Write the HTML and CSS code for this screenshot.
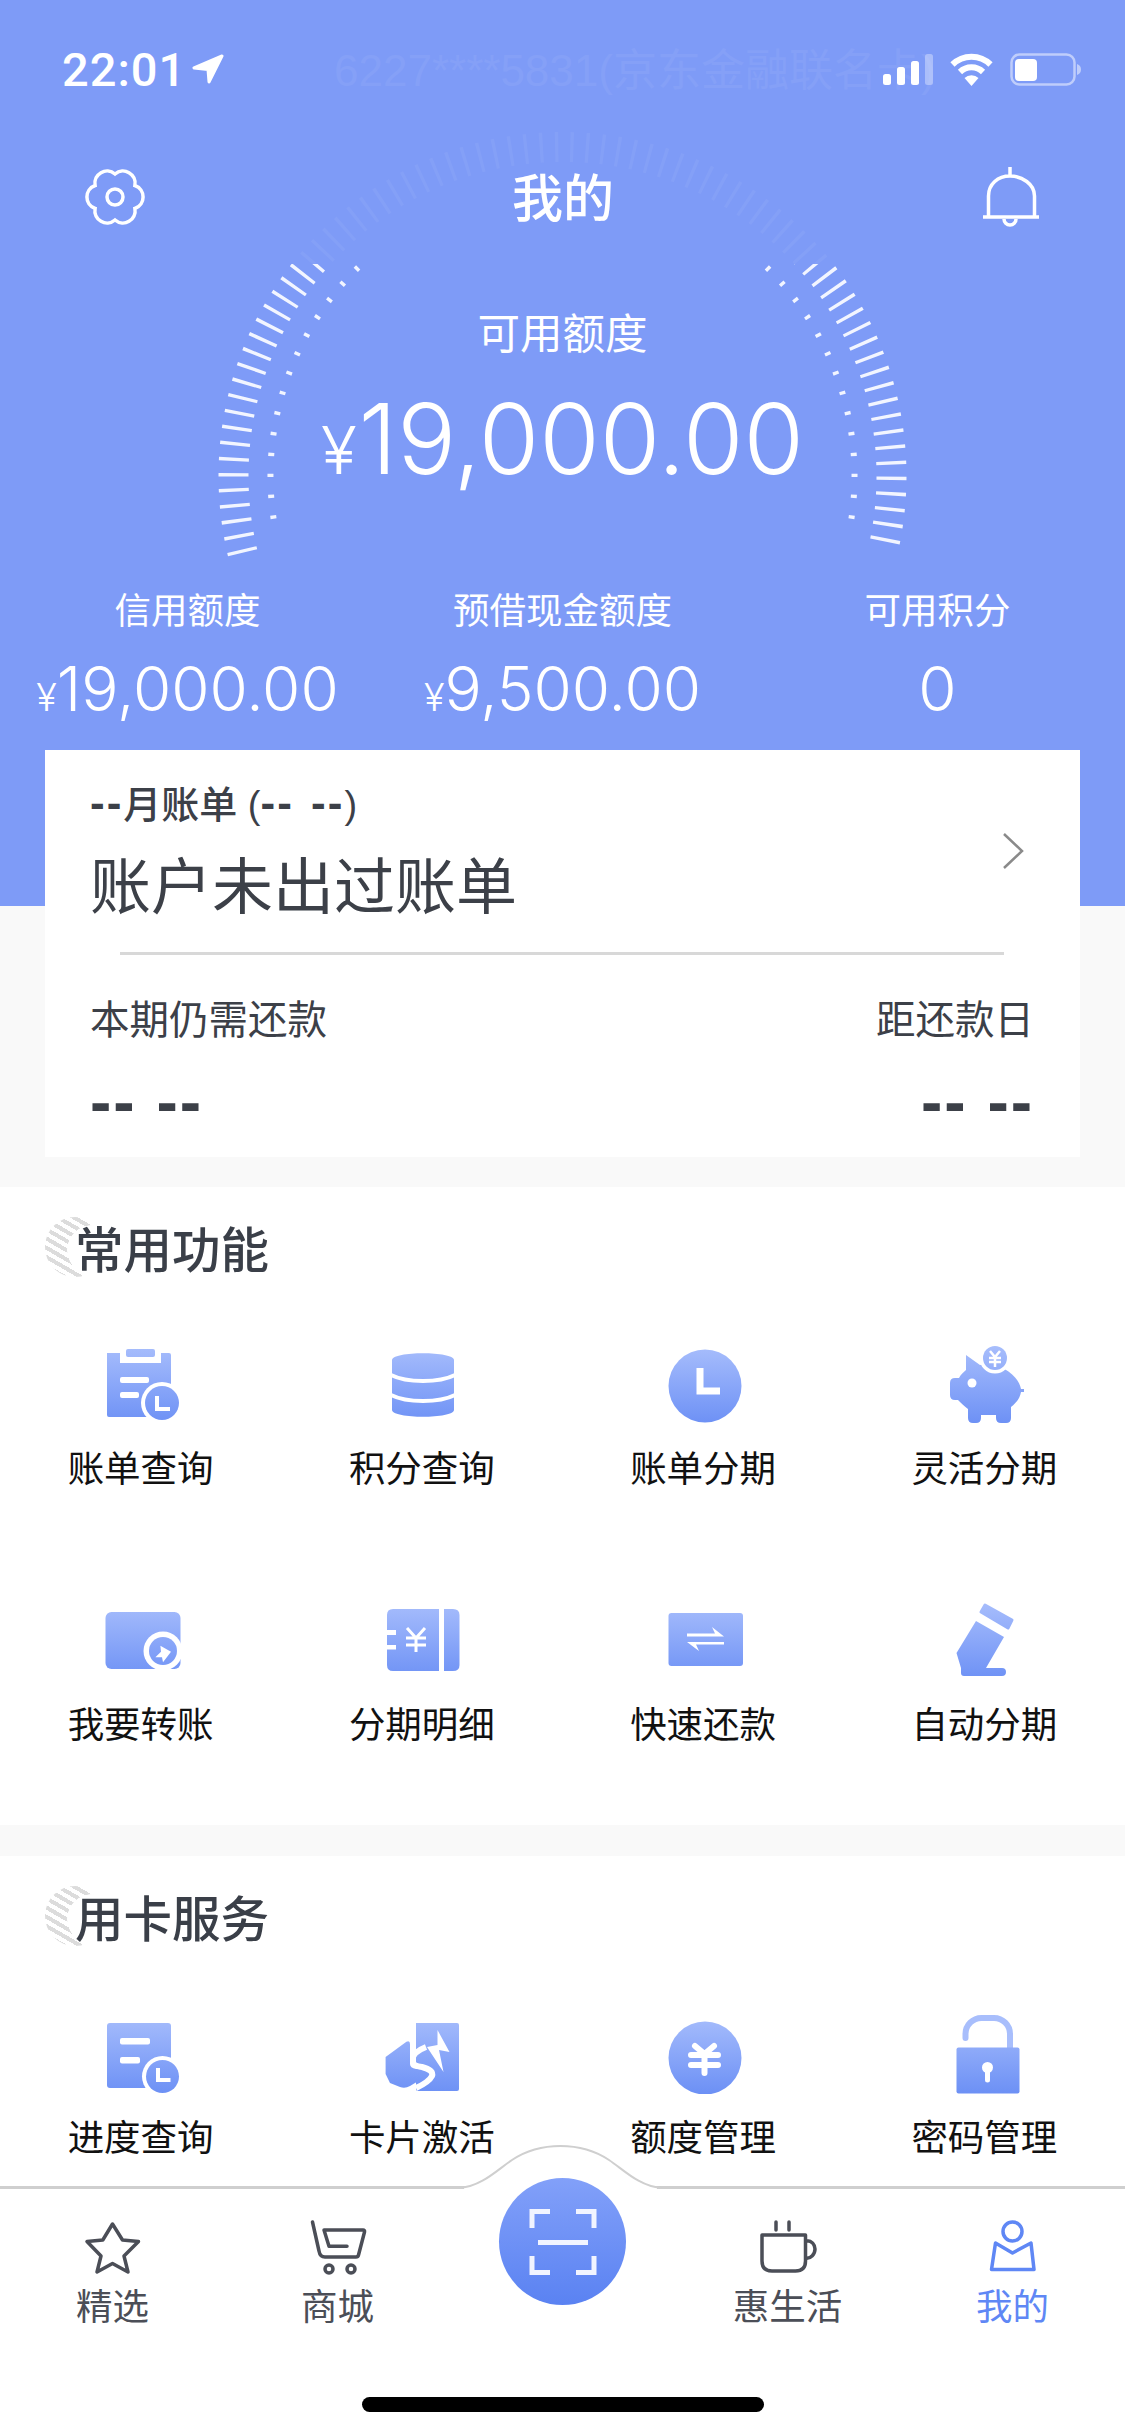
FILE: index.html
```html
<!DOCTYPE html>
<html lang="zh-CN">
<head>
    <meta charset="UTF-8">
    <meta name="viewport" content="width=device-width, initial-scale=1.0">
    <title>我的</title>
    <link rel="stylesheet" href="styles.css">
</head>
<body>
    <!-- shared icon gradient -->
    <svg class="defs" width="0" height="0">
        <defs>
            <linearGradient id="ig" gradientUnits="userSpaceOnUse" x1="0" y1="0" x2="0" y2="80">
                <stop offset="0" stop-color="#a8befc"/>
                <stop offset="1" stop-color="#6c90f5"/>
            </linearGradient>
        </defs>
    </svg>

    <header class="hero">
        <!-- gauge ticks -->
        <svg class="gauge" width="1125" height="600" viewBox="0 0 1125 600">
            <defs>
                <clipPath id="gauge-low"><rect x="0" y="264" width="1125" height="336"/></clipPath>
                <clipPath id="gauge-high"><rect x="0" y="0" width="1125" height="264"/></clipPath>
            </defs>
            <path class="tick tick-faint" clip-path="url(#gauge-high)" d="M242.6 552.8A329 329 0 1 1 882.4 552.8"/>
            <path class="tick" clip-path="url(#gauge-low)" d="M242.6 552.8A329 329 0 1 1 882.4 552.8"/>
            <path class="dot" d="M273.6 518.7A292 292 0 0 1 359.6 266"/>
            <path class="dot" d="M851.4 518.7A292 292 0 0 0 765.4 266"/>
        </svg>

        <div class="status">
            <span class="ghost">6227****5831(京东金融联名卡)</span>
            <span class="time">22:01</span>
            <svg class="loc" width="32" height="30" viewBox="0 0 32 30"><path d="M30 2L2 14L16 15.500L17 28Z"/></svg>
            <div class="status-right">
                <svg width="50" height="32" viewBox="0 0 50 32">
                    <rect x="0" y="21" width="8" height="11" rx="2.500" fill="#fff"/>
                    <rect x="14" y="14" width="8" height="18" rx="2.500" fill="#fff"/>
                    <rect x="28" y="8" width="8" height="24" rx="2.500" fill="#fff"/>
                    <rect x="42" y="1" width="8" height="31" rx="2.500" fill="#fff" opacity=".35"/>
                </svg>
                <svg width="47" height="33" viewBox="0 0 47 33">
                    <path d="M4.500 11.500A27 27 0 0 1 42.500 11.500M12 19A16.500 16.500 0 0 1 35 19" fill="none" stroke="#fff" stroke-width="6"/>
                    <path d="M16.500 25A10 10 0 0 1 30.500 25L23.500 33Z" fill="#fff"/>
                </svg>
                <svg width="71" height="33" viewBox="0 0 71 33">
                    <rect x="1.500" y="1.500" width="63" height="30" rx="8" fill="none" stroke="#fff" stroke-width="2.500" opacity=".5"/>
                    <rect x="5" y="6" width="22" height="22" rx="4" fill="#fff"/>
                    <path d="M67 11C70 12 71 14 71 16.500C71 19 70 21 67 22Z" fill="#fff" opacity=".5"/>
                </svg>
            </div>
        </div>

        <nav class="topnav">
            <svg width="60" height="60" viewBox="0 0 60 60" class="line-white">
                <path d="M30 7C38.700 -.5 52 7.200 49.900 18.500C60.800 22.300 60.800 37.700 49.900 41.500C52 52.800 38.700 60.500 30 53C21.300 60.500 8 52.800 10.100 41.500C-.8 37.700 -.8 22.300 10.100 18.500C8 7.200 21.300 -.5 30 7Z"/>
                <circle cx="30" cy="30" r="8"/>
            </svg>
            <h1 class="title">我的</h1>
            <svg width="60" height="60" viewBox="0 0 60 60" class="line-white">
                <path d="M29 0V9M7.500 49V29C7.500 17 17 9 29 9C41 9 53.500 17 53.500 29V49M2 50H58M23 52A6 6 0 0 0 35 52"/>
            </svg>
        </nav>

        <p class="avail-label">可用额度</p>
        <p class="avail-amount"><span class="yen">¥</span>19,000.00</p>

        <div class="stats">
            <div class="stat">
                <p class="stat-label">信用额度</p>
                <p class="stat-value"><span class="yen-s">¥</span>19,000.00</p>
            </div>
            <div class="stat">
                <p class="stat-label">预借现金额度</p>
                <p class="stat-value"><span class="yen-s">¥</span>9,500.00</p>
            </div>
            <div class="stat">
                <p class="stat-label">可用积分</p>
                <p class="stat-value">0</p>
            </div>
        </div>
    </header>

    <section class="card">
        <div class="card-top">
            <div>
                <p class="card-month"><span class="dd">--</span>月账单 (<span class="dd">-- --</span>)</p>
                <p class="card-title">账户未出过账单</p>
            </div>
            <svg class="chevron" width="22" height="38" viewBox="0 0 22 38"><path d="M2 2L20 19L2 36"/></svg>
        </div>
        <div class="card-line"></div>
        <div class="card-bottom">
            <div>
                <p class="card-sub">本期仍需还款</p>
                <p class="card-dash">-- --</p>
            </div>
            <div class="right">
                <p class="card-sub">距还款日</p>
                <p class="card-dash">-- --</p>
            </div>
        </div>
    </section>

    <section class="block">
        <h2 class="block-head"><i class="deco"></i><span>常用功能</span></h2>
        <div class="grid">
            <div class="item">
                <svg class="ico" viewBox="0 0 80 80">
                    <path d="M6 8H19V18H60V8H68Q70 8 70 10V70Q70 72 68 72H8Q6 72 6 70Z" fill="url(#ig)"/>
                    <rect x="25" y="4" width="29" height="8" rx="2" fill="url(#ig)"/>
                    <rect x="19" y="32" width="29" height="6" rx="2" fill="#fff"/>
                    <rect x="19" y="47" width="19" height="6" rx="2" fill="#fff"/>
                    <circle cx="61" cy="58" r="21" fill="#fff"/>
                    <circle cx="61" cy="58" r="17" fill="url(#ig)"/>
                    <path d="M56 51V64H69" fill="none" stroke="#fff" stroke-width="4"/>
                </svg>
                <p>账单查询</p>
            </div>
            <div class="item">
                <svg class="ico" viewBox="0 0 80 80">
                    <path d="M10 15C10 6 72 6 72 15V65C72 74 10 74 10 65Z" fill="url(#ig)"/>
                    <path d="M9 30C25 38 57 38 73 30M9 50C25 58 57 58 73 50" fill="none" stroke="#fff" stroke-width="4"/>
                </svg>
                <p>积分查询</p>
            </div>
            <div class="item">
                <svg class="ico" viewBox="0 0 80 80">
                    <circle cx="42" cy="41" r="36.500" fill="url(#ig)"/>
                    <path d="M37 23V46H57" fill="none" stroke="#fff" stroke-width="7"/>
                </svg>
                <p>账单分期</p>
            </div>
            <div class="item">
                <svg class="ico" viewBox="0 0 80 80">
                    <path d="M22 10L36 20C52 16 74 28 77 44H82V47H77C76 53 73 57 67 62V73Q67 78 62 78H57Q52 78 52 73V70H37V73Q37 78 32 78H29Q24 78 24 73V64C20 61 17 58 14 55H11Q6 55 6 50V38Q6 33 11 33H15C17 29 20 27 22 25Z" fill="url(#ig)"/>
                    <circle cx="28" cy="38" r="4.500" fill="#fff"/>
                    <circle cx="51" cy="13" r="15.500" fill="#fff"/>
                    <circle cx="51" cy="13" r="12" fill="url(#ig)"/>
                    <path d="M46 6L51 12L56 6M45 13H57M45 17H57M51 12V22" fill="none" stroke="#fff" stroke-width="2.500"/>
                </svg>
                <p>灵活分期</p>
            </div>
            <div class="item">
                <svg class="ico" viewBox="0 0 80 80">
                    <rect x="4.500" y="11" width="75" height="57" rx="6" fill="url(#ig)"/>
                    <circle cx="62" cy="50" r="19.500" fill="#fff"/>
                    <circle cx="62" cy="50" r="14" fill="url(#ig)"/>
                    <path d="M59.400 44.700L70 50.700L62 61.300L61 56.300H54.400L60 50.700Z" fill="#fff"/>
                </svg>
                <p>我要转账</p>
            </div>
            <div class="item">
                <svg class="ico" viewBox="0 0 80 80">
                    <path d="M11 8H57V70H11Q5 70 5 64V48.500H14V44H5V34H14V29H5V14Q5 8 11 8Z" fill="url(#ig)"/>
                    <path d="M62 8H71Q77.500 8 77.500 14V64Q77.500 70 71 70H62Z" fill="url(#ig)"/>
                    <path d="M25 27L34 37L43 27M24 37H44M24 44H44M34 37V51" fill="none" stroke="#fff" stroke-width="3"/>
                </svg>
                <p>分期明细</p>
            </div>
            <div class="item">
                <svg class="ico" viewBox="0 0 80 80">
                    <rect x="5.500" y="12" width="74.500" height="53" rx="3" fill="url(#ig)"/>
                    <path d="M24 32.500H52L49 26L61 35.500H24ZM61 43.500H33L36 50L24 41H61Z" fill="#fff"/>
                </svg>
                <p>快速还款</p>
            </div>
            <div class="item">
                <svg class="ico" viewBox="0 0 80 80">
                    <path d="M41 4L68 19L64 27L37 11Z" fill="url(#ig)" stroke="url(#ig)" stroke-width="3" stroke-linejoin="round"/>
                    <path d="M32 20L60 36L42 67H58Q62 67 62 71Q62 75 58 75H20Q17 75 17 72V67L12.500 52Z" fill="url(#ig)"/>
                </svg>
                <p>自动分期</p>
            </div>
        </div>
    </section>

    <section class="block block-last">
        <h2 class="block-head"><i class="deco"></i><span>用卡服务</span></h2>
        <div class="grid">
            <div class="item">
                <svg class="ico" viewBox="0 0 80 80">
                    <rect x="6" y="9" width="64" height="65" rx="3" fill="url(#ig)"/>
                    <rect x="19" y="24" width="30" height="6.500" rx="2" fill="#fff"/>
                    <rect x="19" y="43" width="20" height="6.500" rx="2" fill="#fff"/>
                    <circle cx="61.500" cy="62.500" r="20.500" fill="#fff"/>
                    <circle cx="61.500" cy="62.500" r="16.500" fill="url(#ig)"/>
                    <path d="M57 54V66H69.500" fill="none" stroke="#fff" stroke-width="4"/>
                </svg>
                <p>进度查询</p>
            </div>
            <div class="item">
                <svg class="ico" viewBox="0 0 80 80">
                    <path d="M36 9H75Q77 9 77 11V75Q77 77 75 77H36Q34 77 34 75V9Z" fill="url(#ig)"/>
                    <path d="M55.500 16L67.500 38L57 36L61.500 58L45 33L55.500 31Z" fill="#fff"/>
                    <path d="M44 33Q31 38 30 46Q30 52 40 53Q52 56 50 62Q47 68 34 74" fill="none" stroke="#fff" stroke-width="6"/>
                    <path d="M3.600 43L24.400 27.700Q28 26 28 30V50Q28 54 34 55L43 58Q47 60 43 63L28 72Q23 75 18 73L8 69L3.600 60Z" fill="url(#ig)"/>
                </svg>
                <p>卡片激活</p>
            </div>
            <div class="item">
                <svg class="ico" viewBox="0 0 80 80">
                    <circle cx="42" cy="44" r="36.500" fill="url(#ig)"/>
                    <path d="M32 32L41.500 40L51 32M28 41H55M28 51H55M41.500 40V59" fill="none" stroke="#fff" stroke-width="6" stroke-linecap="round" stroke-linejoin="round"/>
                </svg>
                <p>额度管理</p>
            </div>
            <div class="item">
                <svg class="ico" viewBox="0 0 80 80">
                    <path d="M21.500 24V20A16 16 0 0 1 37.500 4H50A16 16 0 0 1 66 20V35" fill="none" stroke="#a8befc" stroke-width="6" stroke-linecap="round"/>
                    <rect x="12.500" y="33.500" width="63" height="46" rx="2" fill="url(#ig)"/>
                    <circle cx="43.500" cy="53.500" r="5.500" fill="#fff"/>
                    <path d="M43.500 55V66" stroke="#fff" stroke-width="5" stroke-linecap="round"/>
                </svg>
                <p>密码管理</p>
            </div>
        </div>
    </section>

    <footer class="tabbar">
        <svg class="tab-curve" width="258" height="48" viewBox="0 0 258 48">
            <path d="M32 48V44C50 42 65 27 80 17C95 7 110 3 128.500 3C147 3 162 7 177 17C192 27 207 42 225 44V48Z" fill="#fff"/>
            <path d="M28 45C50 43 65 27 80 17C95 7 110 3 128.500 3C147 3 162 7 177 17C192 27 207 43 229 45" fill="none" stroke="#cfcfcf" stroke-width="2"/>
        </svg>

        <div class="tab">
            <svg class="tab-ico" viewBox="0 0 80 60">
                <path d="M39.500 6L49.500 22L65.500 23.500L51 38L55 54L39.500 45.500L24 54L28 38L14 23.500L29.800 22Z"/>
            </svg>
            <p>精选</p>
        </div>
        <div class="tab">
            <svg class="tab-ico" viewBox="0 0 80 60">
                <path d="M14.500 4L21 33Q22 39 27 39H58Q60 39 60.500 37L66.500 14Q67 12 65 12H26L31 28.300H49"/>
                <circle cx="31" cy="51" r="4"/>
                <circle cx="53" cy="51" r="4"/>
            </svg>
            <p>商城</p>
        </div>
        <div class="tab tab-gap"></div>
        <div class="tab">
            <svg class="tab-ico" viewBox="0 0 80 60">
                <path d="M28 4V12M41 4V12M14 17H57.500V43Q57.500 53 47.500 53H24Q14 53 14 43ZM57.500 23C64 22 67 27 67 31C67 36 63 41 57.500 40"/>
            </svg>
            <p>惠生活</p>
        </div>
        <div class="tab tab-on">
            <svg class="tab-ico" viewBox="0 0 80 60">
                <circle cx="39.500" cy="13.500" r="9.500"/>
                <path d="M22.500 25L39.500 35L58 25L61 51.500H18.500Z"/>
            </svg>
            <p>我的</p>
        </div>

        <div class="scan">
            <svg width="68" height="66" viewBox="0 0 68 66">
                <path d="M21 2.500H3V19M47 2.500H65V19M21 63.500H3V47M47 63.500H65V47M9 33.500H59"/>
            </svg>
        </div>
        <div class="home-bar"></div>
    </footer>
</body>
</html>
```

FILE: styles.css
```css
* {margin:0;padding:0;box-sizing:border-box;}
html, body {width:1125px;height:2436px;overflow:hidden;}
body {position:relative;background:#f9f9f9;font-family:"Liberation Sans","Noto Sans CJK SC",sans-serif;color:#111;}
.defs {position:absolute;}

/* top blue area */
.hero {position:relative;height:906px;background:#7e9bf7;color:#fff;}
.gauge {position:absolute;left:0;top:0;}
.tick {fill:none;stroke:#fff;stroke-width:30;stroke-dasharray:3.4 12.036;opacity:.9;}
.tick-faint {opacity:.05;}
.dot {fill:none;stroke:#fff;stroke-width:6;stroke-dasharray:3.4 17.5;opacity:.9;}

.status {position:relative;top:45px;display:flex;align-items:center;height:48px;padding:0 44px 0 62px;}
.time {font-family:Roboto,"Liberation Sans",sans-serif;font-size:47px;font-weight:500;letter-spacing:1px;}
.loc {margin-left:6px;}
.loc path {fill:#fff;stroke:#fff;stroke-width:3;stroke-linejoin:round;}
.status-right {display:flex;align-items:center;gap:15px;margin-left:auto;}
.ghost {position:absolute;left:334px;top:-10px;font-size:44px;white-space:nowrap;color:#fff;opacity:.05;}

.topnav {position:relative;display:flex;justify-content:space-between;align-items:center;height:76px;margin-top:111px;padding:0 84px 0 85px;}
.title {position:relative;top:-2px;font-size:51px;font-weight:500;}
.line-white {fill:none;stroke:#fff;stroke-width:3.5;}

.avail-label {position:relative;height:60px;margin-top:70px;font-size:42.5px;line-height:60px;text-align:center;}
.avail-amount {position:relative;height:110px;margin-top:19px;font-family:Inter,"Liberation Sans",sans-serif;font-size:98px;font-weight:300;line-height:110px;text-align:center;}
.yen {font-size:66px;margin-right:2px;}

.stats {position:relative;display:grid;grid-template-columns:repeat(3,375px);margin-top:93px;text-align:center;}
.stat-label {height:50px;font-size:36.5px;line-height:50px;}
.stat-value {height:70px;margin-top:17px;font-family:Inter,"Liberation Sans",sans-serif;font-size:62px;font-weight:300;line-height:70px;}
.yen-s {font-size:38px;}

/* bill card */
.card {position:relative;height:407px;margin:-156px 45px 30px;padding:28px 46px 0 45px;background:#fff;color:#3c4048;}
.card-top {display:flex;justify-content:space-between;align-items:center;}
.card-month {height:50px;font-size:38px;line-height:50px;font-weight:500;}
.dd {font-size:44px;font-weight:700;letter-spacing:2px;word-spacing:3px;}
.card-title {height:70px;margin-top:25px;font-size:61px;line-height:70px;}
.chevron {margin-right:10px;fill:none;stroke:#8a8a8a;stroke-width:2.500;}
.card-line {height:3px;margin:29px 30px 0 30px;background:#d8d8d8;}
.card-bottom {display:flex;justify-content:space-between;margin-top:40px;}
.card-sub {height:50px;font-size:39.5px;line-height:50px;}
.card-dash {height:70px;margin-top:22px;font-size:64px;line-height:70px;font-weight:700;letter-spacing:2px;}
.right {text-align:right;}

/* function blocks */
.block {background:#fff;margin-bottom:31px;}
.block-head {position:relative;display:flex;align-items:center;height:126px;padding:0 0 6px 75px;font-size:48.5px;font-weight:500;color:#3a3f48;}
.block-head span {position:relative;}
.deco {position:absolute;left:45px;top:30px;width:60px;height:60px;border-radius:50%;
       background:radial-gradient(circle 25px at 47px 33px,#fff 98%,transparent 100%),repeating-linear-gradient(30deg,#dcdcdc 0,#dcdcdc 4px,transparent 4px,transparent 8px);
}
.grid {display:grid;grid-template-columns:repeat(4,281.25px);}
.item {height:256px;padding-top:32px;text-align:center;}
.ico {display:block;width:80px;height:80px;margin:0 auto;}
.item p {height:44px;margin-top:23px;font-size:36.5px;line-height:44px;color:#111;}

/* bottom tab bar */
.tabbar {position:absolute;left:0;top:2186px;display:flex;width:1125px;height:250px;padding-top:29px;background:#fff;border-top:3px solid #cfcfcf;}
.tab-curve {position:absolute;left:432px;top:-46px;}
.tab {width:225px;text-align:center;color:#4b4e57;}
.tab-ico {display:block;width:80px;height:60px;margin:0 auto;fill:none;stroke:#4b4e57;stroke-width:3.500;stroke-linejoin:round;stroke-linecap:round;}
.tab p {height:44px;margin-top:8px;font-size:36.5px;line-height:44px;}
.tab-on {color:#5f87f5;}
.tab-on .tab-ico {stroke:#5f87f5;}
.scan {position:absolute;left:499px;top:-11px;display:flex;justify-content:center;align-items:center;width:127px;height:127px;border-radius:50%;background:linear-gradient(#82a0f9,#5a82f2);}
.scan svg {fill:none;stroke:#f1f4ff;stroke-width:5;}
.home-bar {position:absolute;left:362px;top:208px;width:402px;height:15px;border-radius:8px;background:#000;}
```
